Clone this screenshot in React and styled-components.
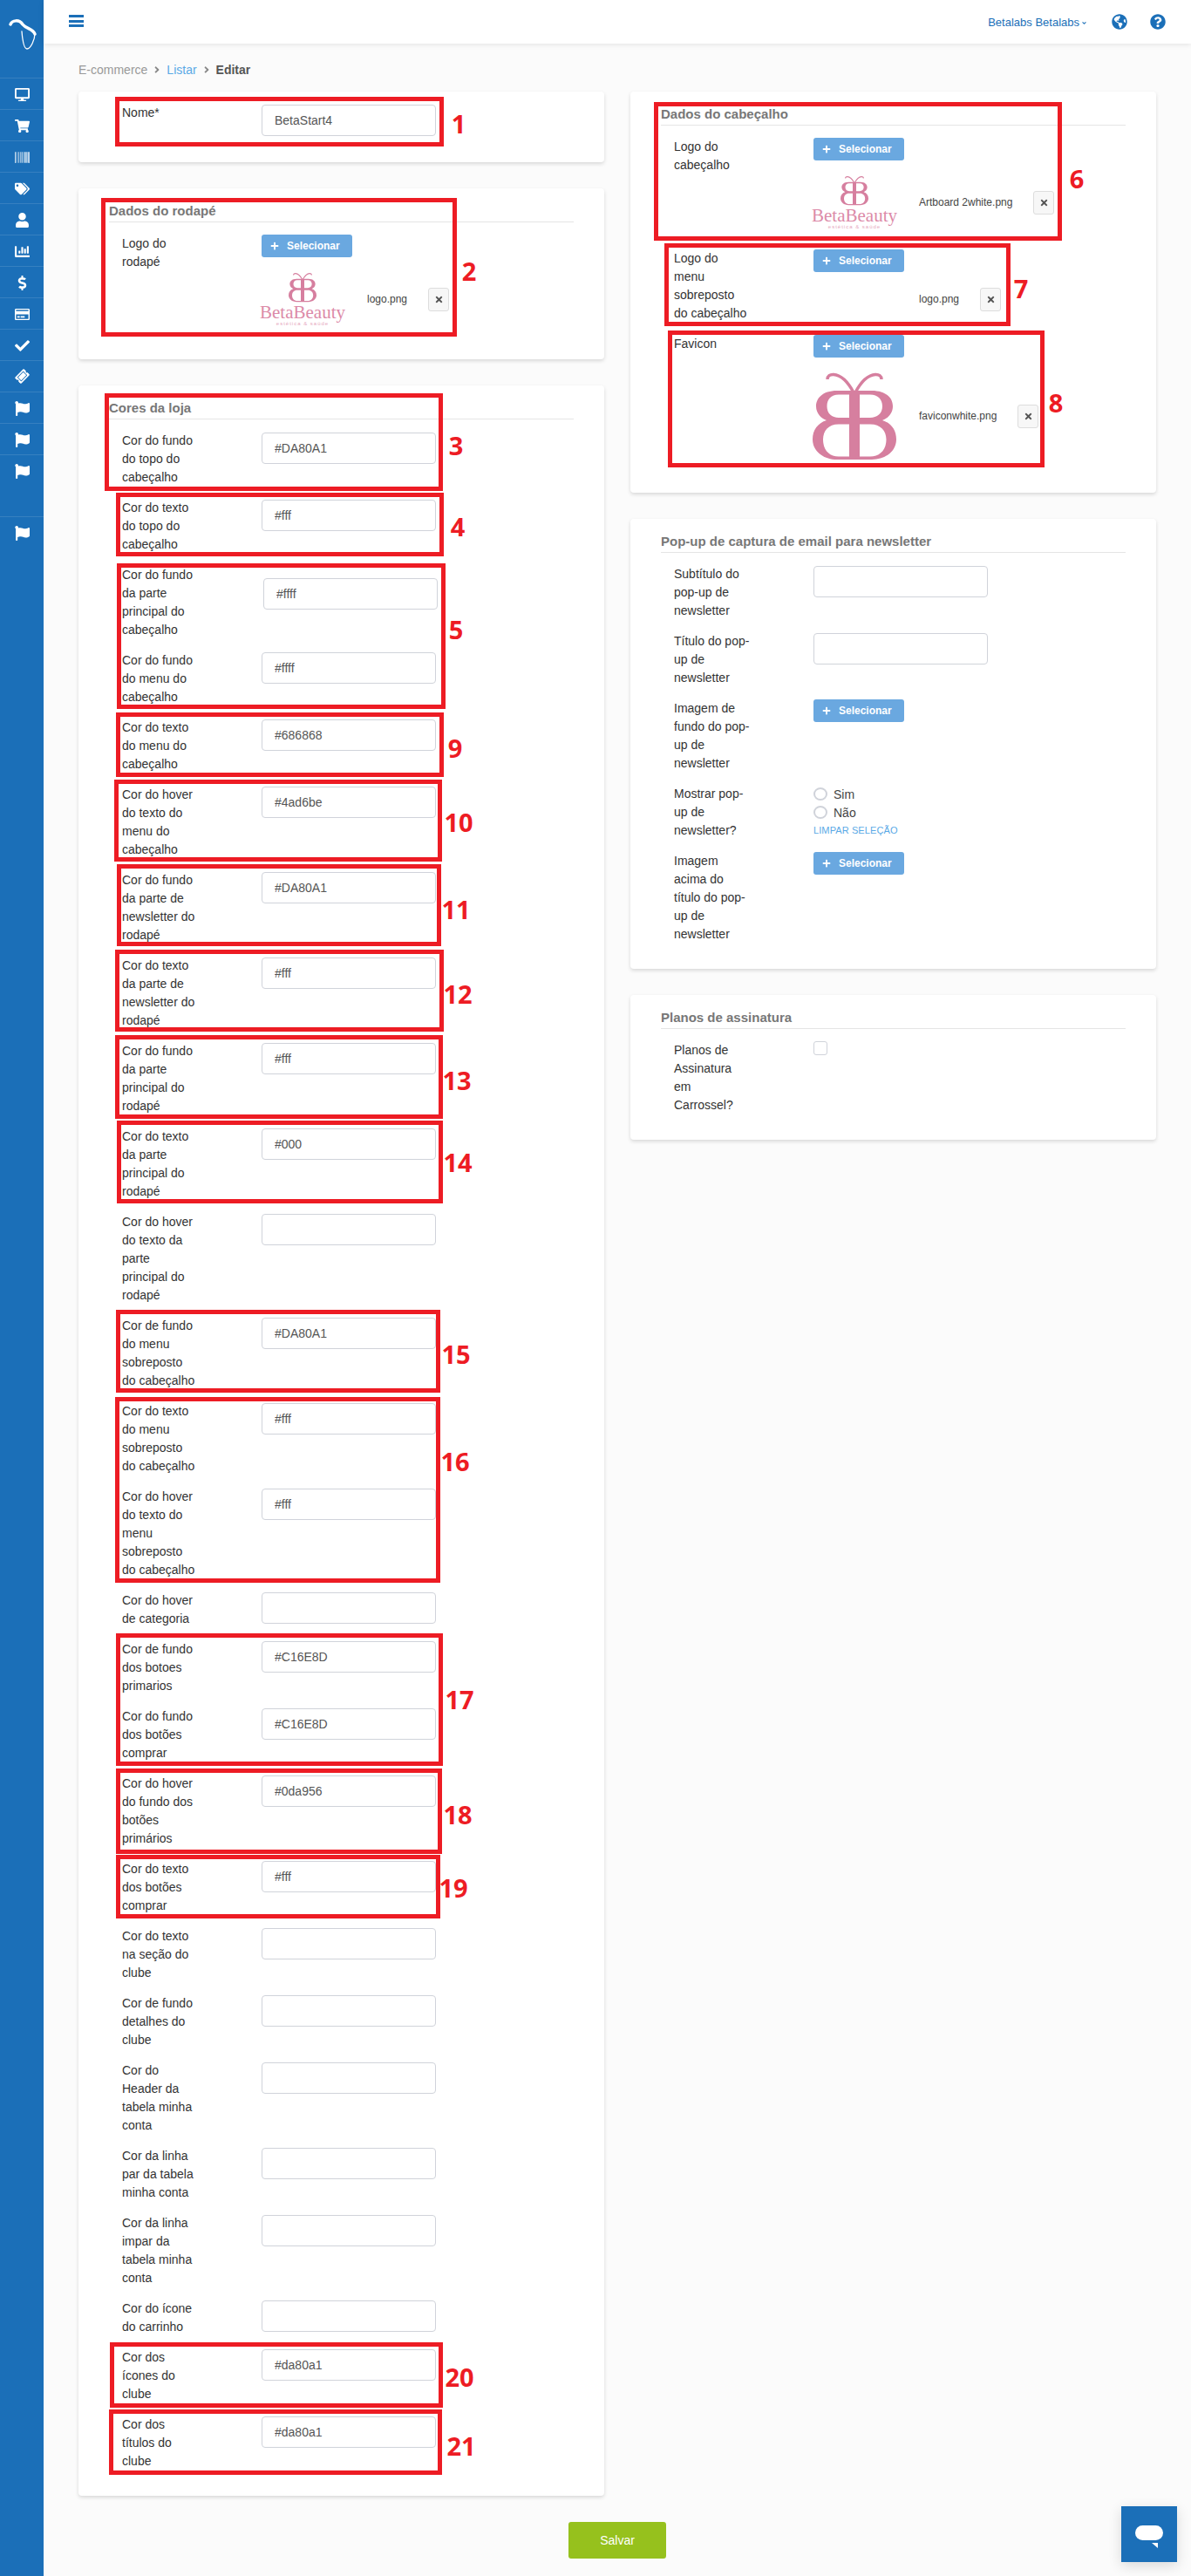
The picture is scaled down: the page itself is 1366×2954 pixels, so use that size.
import React from "react";
import styled, { createGlobalStyle } from "styled-components";
import {
  FaDesktop, FaShoppingCart, FaBarcode, FaTags, FaUser, FaChartBar, FaDollarSign,
  FaRegCreditCard, FaCheck, FaTicketAlt, FaFlag, FaGlobeAmericas, FaQuestionCircle,
  FaPlus, FaTimes, FaAngleRight, FaAngleDown,
} from "react-icons/fa";

const BLUE = "#1b6fb8";
const PINK = "#d67f9f";

const Global = createGlobalStyle`
  html, body { margin: 0; padding: 0; background: #fbfbfb; }
  body { font-family: "Liberation Sans", Arial, sans-serif; font-size: 14px; color: #333; }
  * { box-sizing: border-box; }
`;

const Page = styled.div`
  position: relative;
  display: flex;
  width: 1366px;
  min-height: 2954px;
`;

const Sidebar = styled.aside`
  width: 50px;
  flex: none;
  background: ${BLUE};
  color: #fff;
`;
const SideLogo = styled.div`
  height: 89px;
  svg { display: block; }
`;
const SideItem = styled.div`
  height: ${(p) => p.$h || 36}px;
  padding-top: 10px;
  border-top: 1px solid rgba(255, 255, 255, 0.12);
  display: flex;
  align-items: flex-start;
  justify-content: center;
  font-size: 17px;
`;
const Tilted = styled.span`
  display: flex;
  transform: rotate(-45deg);
  font-size: 15px;
`;

const Main = styled.div`
  flex: 1;
  min-width: 0;
  display: flex;
  flex-direction: column;
`;
const TopBar = styled.header`
  height: 50px;
  background: #fff;
  box-shadow: 0 1px 6px rgba(0, 0, 0, 0.1);
  display: flex;
  align-items: center;
  justify-content: space-between;
  padding: 0 29px;
`;
const Burger = styled.div`
  width: 17px;
  display: flex;
  flex-direction: column;
  gap: 2.5px;
  margin-top: -2px;
  i { display: block; height: 3px; background: ${BLUE}; }
`;
const TopRight = styled.div`
  display: flex;
  align-items: center;
  color: ${BLUE};
`;
const UserName = styled.span`
  font-size: 13px;
  display: flex;
  align-items: center;
  gap: 2px;
  margin-right: 28px;
  svg { font-size: 7px; margin-top: 2px; }
`;
const TopIcon = styled.span`
  display: flex;
  font-size: 18px;
  margin-left: ${(p) => p.$ml || 0}px;
`;

const Crumbs = styled.nav`
  height: 55px;
  padding: 22px 0 0 40px;
  display: flex;
  align-items: flex-start;
  line-height: 16px;
  color: #999;
  svg { font-size: 12px; margin: 2px 5px 0; color: #888; }
`;
const CrumbLink = styled.a`
  color: #5aa9e6;
`;
const CrumbCurrent = styled.b`
  color: #555;
`;

const Columns = styled.div`
  display: grid;
  grid-template-columns: 603px 603px;
  gap: 30px;
  padding-left: 40px;
  align-items: start;
`;
const Column = styled.div`
  display: flex;
  flex-direction: column;
  gap: 30px;
`;
const Card = styled.section`
  background: #fff;
  border-radius: 4px;
  box-shadow: 0 2px 4px rgba(0, 0, 0, 0.14);
  padding: ${(p) => (p.$plain ? "14px 35px 16px" : "0 35px 15px")};
`;
const CardTitle = styled.h3`
  margin: 0 0 14px;
  padding: 15px 0 2px;
  font-size: 15px;
  line-height: 21px;
  font-weight: 700;
  color: #777;
  border-bottom: 1px solid #e5e5e5;
`;
const Row = styled.div`
  display: grid;
  grid-template-columns: 160px 1fr;
  padding-left: 15px;
  margin-bottom: 14px;
`;
const Label = styled.label`
  display: block;
  width: 87px;
  line-height: 21px;
  color: #333;
`;
const Control = styled.div`
  min-width: 0;
`;
const TextInput = styled.input`
  display: block;
  width: 200px;
  height: 36px;
  margin: ${(p) => (p.$nudged ? "14px 0 0 2px" : "1px 0 0")};
  padding: 0 14px;
  border: 1px solid #d0d3da;
  border-radius: 4px;
  background: #fff;
  font: 14px "Liberation Sans", Arial, sans-serif;
  color: #555;
  outline: none;
`;
const SelectButton = styled.button`
  display: flex;
  align-items: center;
  width: 104px;
  height: 26px;
  padding: 0 0 0 10px;
  border: 0;
  border-radius: 3px;
  background: #6aa8e0;
  color: #fff;
  font: 700 12px "Liberation Sans", Arial, sans-serif;
  svg { font-size: 10px; margin-right: 9px; }
`;
const FileRow = styled.div`
  display: flex;
  align-items: center;
  height: ${(p) => p.$h}px;
  margin-top: 8px;
`;
const Preview = styled.div`
  width: 100px;
  margin: 0 24px 0 -3px;
  display: flex;
  flex-direction: column;
  align-items: center;
  svg { display: block; }
`;
const BrandName = styled.span`
  font-family: "Liberation Serif", serif;
  font-size: 21px;
  line-height: 18px;
  margin-top: 2px;
  color: #dc8aa8;
  white-space: nowrap;
`;
const BrandSub = styled.span`
  font-size: 6px;
  line-height: 8px;
  letter-spacing: 1px;
  color: #e6a8be;
  white-space: nowrap;
`;
const FileName = styled.span`
  font-size: 12px;
  color: #444;
  margin-right: 24px;
`;
const RemoveButton = styled.button`
  width: 24px;
  height: 27px;
  padding: 0;
  display: flex;
  align-items: center;
  justify-content: center;
  background: #f7f7f7;
  border: 1px solid #ddd;
  border-radius: 3px;
  color: #555;
  font-size: 11px;
`;
const RadioLine = styled.label`
  display: flex;
  align-items: center;
  height: 21px;
  gap: 7px;
  color: #444;
`;
const Radio = styled.input`
  appearance: none;
  width: 16px;
  height: 15px;
  margin: 0;
  border: 2px solid #d0d3da;
  border-radius: 50%;
  background: #fff;
`;
const ClearLink = styled.a`
  display: block;
  font-size: 11px;
  line-height: 21px;
  letter-spacing: 0.1px;
  color: #5aa9e6;
`;
const Check = styled.input`
  appearance: none;
  display: block;
  width: 16px;
  height: 16px;
  margin: 0;
  border: 1px solid #d0d3da;
  border-radius: 3px;
  background: #fff;
`;

const Footer = styled.div`
  display: flex;
  justify-content: center;
  padding: 30px 0 20px;
`;
const SaveButton = styled.button`
  width: 112px;
  height: 42px;
  border: 0;
  border-radius: 3px;
  background: #96c11d;
  color: #fff;
  font: 14px "Liberation Sans", Arial, sans-serif;
`;
const ChatButton = styled.div`
  position: absolute;
  right: 16px;
  bottom: 16px;
  width: 64px;
  height: 64px;
  background: ${BLUE};
  box-shadow: 0 4px 14px rgba(0, 0, 0, 0.14);
  svg { display: block; }
`;

const Marks = styled.div`
  position: absolute;
  inset: 0;
  pointer-events: none;
`;
const MarkBox = styled.div`
  position: absolute;
  left: ${(p) => p.$x}px;
  top: ${(p) => p.$y}px;
  width: ${(p) => p.$w}px;
  height: ${(p) => p.$h}px;
  border: 5px solid #ed1c24;
`;
const MarkNumber = styled.span`
  position: absolute;
  left: ${(p) => p.$x}px;
  top: ${(p) => p.$y}px;
  transform: translate(-50%, -50%);
  font: 700 29px/1 "Open Sans", sans-serif;
  color: #ed1c24;
`;

const Butterfly = ({ width, height }) => (
  <svg width={width} height={height} viewBox="0 0 96 100" fill="none">
    <path d="M47 23C40 10 32 3 24 2.500C20 2.300 17 4 17 8M49 23C56 10 64 3 72 2.500C76 2.300 79 4 79 8" stroke={PINK} strokeWidth="3.500" />
    <path
      fill={PINK}
      fillRule="evenodd"
      d="M28 21H68C85 21 92 30 92 39C92 47 86 53 80 55C90 58 96 66 96 77C96 90 84 100 68 100H28C12 100 0 90 0 77C0 66 6 58 16 55C10 53 4 47 4 39C4 30 11 21 28 21Z
         M54 25.500H66C75 25.500 80 31 80 39C80 47 74 52 66 52H54Z
         M54 59.500H66C78 59.500 84.500 67 84.500 77C84.500 89 77 96.500 66 96.500H54Z
         M42 25.500H30C21 25.500 16.500 31 16.500 39C16.500 47 22 52 30 52H42Z
         M42 59.500H30C18 59.500 12 67 12 77C12 89 19 96.500 30 96.500H42Z"
    />
  </svg>
);

const BrandLogo = () => (
  <Preview>
    <Butterfly width={32} height={35} />
    <BrandName>BetaBeauty</BrandName>
    <BrandSub>estética &amp; saúde</BrandSub>
  </Preview>
);

const Remove = () => (
  <RemoveButton type="button" aria-label="Remover"><FaTimes /></RemoveButton>
);
const Select = () => (
  <SelectButton type="button"><FaPlus />Selecionar</SelectButton>
);

const Field = ({ label, value = "", nudged }) => (
  <Row>
    <Label>{label}</Label>
    <Control><TextInput readOnly value={value} $nudged={nudged} /></Control>
  </Row>
);

const Upload = ({ label, name, h, children }) => (
  <Row>
    <Label>{label}</Label>
    <Control>
      <Select />
      {name && (
        <FileRow $h={h}>
          {children || <Preview />}
          <FileName>{name}</FileName>
          <Remove />
        </FileRow>
      )}
    </Control>
  </Row>
);

const colorFields = [
  ["Cor do fundo do topo do cabeçalho", "#DA80A1"],
  ["Cor do texto do topo do cabeçalho", "#fff"],
  ["Cor do fundo da parte principal do cabeçalho", "#ffff", true],
  ["Cor do fundo do menu do cabeçalho", "#ffff"],
  ["Cor do texto do menu do cabeçalho", "#686868"],
  ["Cor do hover do texto do menu do cabeçalho", "#4ad6be"],
  ["Cor do fundo da parte de newsletter do rodapé", "#DA80A1"],
  ["Cor do texto da parte de newsletter do rodapé", "#fff"],
  ["Cor do fundo da parte principal do rodapé", "#fff"],
  ["Cor do texto da parte principal do rodapé", "#000"],
  ["Cor do hover do texto da parte principal do rodapé", ""],
  ["Cor de fundo do menu sobreposto do cabeçalho", "#DA80A1"],
  ["Cor do texto do menu sobreposto do cabeçalho", "#fff"],
  ["Cor do hover do texto do menu sobreposto do cabeçalho", "#fff"],
  ["Cor do hover de categoria", ""],
  ["Cor de fundo dos botoes primarios", "#C16E8D"],
  ["Cor do fundo dos botões comprar", "#C16E8D"],
  ["Cor do hover do fundo dos botões primários", "#0da956"],
  ["Cor do texto dos botões comprar", "#fff"],
  ["Cor do texto na seção do clube", ""],
  ["Cor de fundo detalhes do clube", ""],
  ["Cor do Header da tabela minha conta", ""],
  ["Cor da linha par da tabela minha conta", ""],
  ["Cor da linha impar da tabela minha conta", ""],
  ["Cor do ícone do carrinho", ""],
  ["Cor dos ícones do clube", "#da80a1"],
  ["Cor dos títulos do clube", "#da80a1"],
];

const sideIcons = [
  <FaDesktop />, <FaShoppingCart />, <FaBarcode />, <FaTags />, <FaUser />, <FaChartBar />,
  <FaDollarSign />, <FaRegCreditCard />, <FaCheck />, <Tilted><FaTicketAlt /></Tilted>,
  <FaFlag />, <FaFlag />,
];

/* n, box x0, y0, x1, y1, number centre x, y */
const marks = [
  [1, 132, 111, 509, 168, 526, 141],
  [2, 116, 227, 524, 386, 538, 310],
  [3, 120, 451, 508, 563, 523, 510],
  [4, 133, 565, 509, 638, 525, 603],
  [5, 134, 646, 511, 813, 523, 721],
  [6, 750, 117, 1218, 276, 1235, 204],
  [7, 762, 279, 1159, 374, 1171, 330],
  [8, 766, 379, 1198, 536, 1211, 461],
  [9, 133, 817, 509, 891, 522, 857],
  [10, 131, 894, 507, 988, 526, 942],
  [11, 134, 991, 506, 1085, 523, 1042],
  [12, 132, 1089, 509, 1183, 525, 1139],
  [13, 132, 1187, 508, 1283, 524, 1238],
  [14, 134, 1285, 508, 1380, 525, 1332],
  [15, 133, 1502, 505, 1597, 523, 1552],
  [16, 132, 1602, 505, 1815, 522, 1675],
  [17, 133, 1873, 508, 2025, 527, 1948],
  [18, 133, 2028, 507, 2126, 525, 2080],
  [19, 133, 2127, 505, 2200, 520, 2164],
  [20, 126, 2686, 508, 2761, 527, 2725],
  [21, 125, 2763, 507, 2838, 529, 2804],
];

export default function App() {
  return (
    <Page>
      <Global />
      <Sidebar>
        <SideLogo>
          <svg width="50" height="60" viewBox="0 0 50 60" fill="none" stroke="#fff" strokeLinecap="round">
            <path d="M12 28C14 23 22 22 26 28C30 33 38 33 40 39" strokeWidth="3.500" />
            <path d="M25 36C26 48 28 56 31 56C35 56 40 46 40 38" strokeWidth="1.300" />
          </svg>
        </SideLogo>
        {sideIcons.map((icon, i) => <SideItem key={i}>{icon}</SideItem>)}
        <SideItem $h={71}><FaFlag /></SideItem>
        <SideItem><FaFlag /></SideItem>
      </Sidebar>

      <Main>
        <TopBar>
          <Burger><i /><i /><i /></Burger>
          <TopRight>
            <UserName>Betalabs Betalabs<FaAngleDown /></UserName>
            <TopIcon><FaGlobeAmericas /></TopIcon>
            <TopIcon $ml={26}><FaQuestionCircle /></TopIcon>
          </TopRight>
        </TopBar>

        <Crumbs>
          E-commerce<FaAngleRight />
          <CrumbLink>Listar</CrumbLink><FaAngleRight />
          <CrumbCurrent>Editar</CrumbCurrent>
        </Crumbs>

        <Columns>
          <Column>
            <Card $plain>
              <Row><Label>Nome*</Label><Control><TextInput readOnly value="BetaStart4" /></Control></Row>
            </Card>
            <Card>
              <CardTitle>Dados do rodapé</CardTitle>
              <Upload label="Logo do rodapé" name="logo.png" h={80}><BrandLogo /></Upload>
            </Card>
            <Card>
              <CardTitle>Cores da loja</CardTitle>
              {colorFields.map(([label, value, nudged]) => (
                <Field key={label} label={label} value={value} nudged={nudged} />
              ))}
            </Card>
          </Column>

          <Column>
            <Card>
              <CardTitle>Dados do cabeçalho</CardTitle>
              <Upload label="Logo do cabeçalho" name="Artboard 2white.png" h={80}><BrandLogo /></Upload>
              <Upload label="Logo do menu sobreposto do cabeçalho" name="logo.png" h={46} />
              <Upload label="Favicon" name="faviconwhite.png" h={118}>
                <Preview><Butterfly width={96} height={100} /></Preview>
              </Upload>
            </Card>
            <Card>
              <CardTitle>Pop-up de captura de email para newsletter</CardTitle>
              <Field label="Subtítulo do pop-up de newsletter" />
              <Field label="Título do pop-up de newsletter" />
              <Upload label="Imagem de fundo do pop-up de newsletter" />
              <Row>
                <Label>Mostrar pop-up de newsletter?</Label>
                <Control>
                  <RadioLine><Radio type="radio" name="popup" />Sim</RadioLine>
                  <RadioLine><Radio type="radio" name="popup" />Não</RadioLine>
                  <ClearLink>LIMPAR SELEÇÃO</ClearLink>
                </Control>
              </Row>
              <Upload label="Imagem acima do título do pop-up de newsletter" />
            </Card>
            <Card>
              <CardTitle>Planos de assinatura</CardTitle>
              <Row>
                <Label>Planos de Assinatura em Carrossel?</Label>
                <Control><Check type="checkbox" /></Control>
              </Row>
            </Card>
          </Column>
        </Columns>

        <Footer><SaveButton type="button">Salvar</SaveButton></Footer>
      </Main>

      <ChatButton>
        <svg width="64" height="64" viewBox="0 0 64 64">
          <rect x="16" y="22" width="32" height="17" rx="8.500" fill="#fff" />
          <path d="M35 42H42V48Z" fill="#fff" />
        </svg>
      </ChatButton>

      <Marks>
        {marks.map(([n, x0, y0, x1, y1, nx, ny]) => (
          <React.Fragment key={n}>
            <MarkBox $x={x0} $y={y0} $w={x1 - x0} $h={y1 - y0} />
            <MarkNumber $x={nx} $y={ny}>{n}</MarkNumber>
          </React.Fragment>
        ))}
      </Marks>
    </Page>
  );
}
